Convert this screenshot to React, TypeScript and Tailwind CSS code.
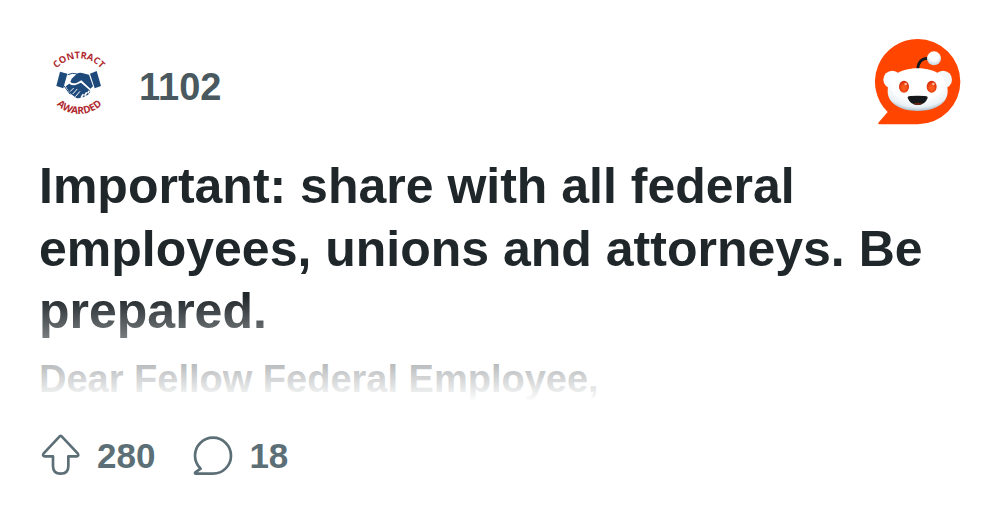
import React from 'react';

function ContractLogo() {
  return (
    <svg viewBox="9 12 240 240" className="size-20 shrink-0" role="img" aria-label="Contract Awarded">
      <defs>
        <path id="arc-top" d="M43 147 A86 86 0 0 1 215 147" />
        <path id="arc-bottom" d="M33 131 A97 97 0 0 0 227 131" />
      </defs>
      <g fill="#b02a30" fontFamily="'Open Sans', 'Liberation Sans', sans-serif" fontWeight="700" textAnchor="middle">
        <text fontSize="28">
          <textPath href="#arc-top" startOffset="50%">CONTRACT</textPath>
        </text>
        <text fontSize="30">
          <textPath href="#arc-bottom" startOffset="50%">AWARDED</textPath>
        </text>
      </g>
      <g transform="translate(-1 -6)">
        <g fill="#1d4a7a">
          <path d="M73 107 L95 113 L83 157 L62 150Z" />
          <path d="M163 113 L183 105 L196 150 L177 157Z" />
          <path d="M108 128 L124 113 Q130 109 139 111 L160 116 L172 151 L164 158 L137 133 L124 140 Q111 145 104 138Z" />
          <path d="M90 151 L101 143 Q112 151 125 145 L136 140 L162 163 Q166 169 160 172 Q158 180 150 178 Q145 186 137 183 Q130 190 121 185 L103 172Z" />
        </g>
        <g fill="none" stroke="#1d4a7a" strokeWidth="3" strokeLinecap="round" strokeLinejoin="round">
          <path d="M97 116 L110 112 L124 114" />
          <path d="M86 151 L103 174" />
        </g>
        <g fill="none" stroke="#fff" strokeLinecap="round">
          <path d="M113 157 L104 166" strokeWidth="3" />
          <path d="M124 160 L112 173" strokeWidth="3" />
          <path d="M132 167 L120 181" strokeWidth="3" />
          <g strokeWidth="5">
            <path d="M138 182 L142 176" />
            <path d="M148 177 L152 171" />
            <path d="M157 170 L160 166" />
          </g>
        </g>
      </g>
    </svg>
  );
}

function RedditLogo() {
  return (
    <svg viewBox="30 27 258 258" className="size-[86px] shrink-0" role="img" aria-label="Reddit">
      <defs>
        <radialGradient id="head" cx="0.5" cy="0.3" r="0.72">
          <stop offset="0.6" stopColor="#fff" />
          <stop offset="0.85" stopColor="#e8f0f5" />
          <stop offset="1" stopColor="#9fb4c4" />
        </radialGradient>
        <radialGradient id="ball" cx="0.5" cy="0.3" r="0.7">
          <stop offset="0.5" stopColor="#fff" />
          <stop offset="1" stopColor="#c5d3dc" />
        </radialGradient>
        <radialGradient id="eye" cx="0.5" cy="0.6" r="0.55">
          <stop offset="0.3" stopColor="#ff5a1c" />
          <stop offset="1" stopColor="#d52a08" />
        </radialGradient>
      </defs>
      <path
        fill="#ff4500"
        d="M158 27 A128 128 0 0 1 158 283 H44 Q36 283 42 276 L68 246 A128 128 0 0 1 158 27Z"
      />
      <path d="M158 117 Q161 84 190 85" fill="none" stroke="#111820" strokeWidth="8" />
      <circle cx="207" cy="85" r="21" fill="url(#ball)" />
      <circle cx="82" cy="149" r="27" fill="#fafcfd" />
      <circle cx="234" cy="149" r="27" fill="#f4f8fa" />
      <path
        d="M158 115 C215 115 248 142 248 184 C248 222 208 243 158 243 C108 243 68 222 68 184 C68 142 101 115 158 115Z"
        fill="url(#head)"
      />
      <ellipse cx="117" cy="170" rx="15" ry="18" fill="url(#eye)" />
      <ellipse cx="200" cy="170" rx="15" ry="18" fill="url(#eye)" />
      <circle cx="122" cy="162" r="4" fill="#ffb59b" />
      <circle cx="205" cy="162" r="4" fill="#ffb59b" />
      <path
        d="M128 204 Q127 198 136 198 Q158 196 180 198 Q189 198 188 204 Q180 225 158 225 Q136 225 128 204Z"
        fill="#15181b"
      />
      <path d="M144 221 Q158 215 172 221 Q166 225 158 225 Q150 225 144 221Z" fill="#66200f" />
    </svg>
  );
}

function UpvoteIcon() {
  return (
    <svg viewBox="27 39 126 129" className="h-[43px] w-[42px]" fill="none" stroke="#5c6f76" strokeWidth="8" strokeLinejoin="round" aria-hidden="true">
      <path d="M89 46 Q92 43 95 46 L143 97 Q148 105 139 106 H115 V136 Q115 158 92 158 Q69 158 69 136 V106 H45 Q36 105 41 97Z" />
    </svg>
  );
}

function CommentIcon() {
  return (
    <svg viewBox="484 39 126 129" className="h-[43px] w-[42px]" fill="none" stroke="#5c6f76" strokeWidth="8" strokeLinejoin="round" aria-hidden="true">
      <path d="M550 50 A54 54 0 0 1 550 158 H499 Q494 158 497 154 L513 143 Q496 126 496 104 A54 54 0 0 1 550 50Z" />
    </svg>
  );
}

export default function App() {
  return (
    <main className="min-h-screen bg-white px-[39px] pt-[39px] pb-10 font-['Liberation_Sans',Arial,sans-serif] font-bold">
      <header className="flex items-center justify-between">
        <div className="flex items-center gap-5">
          <ContractLogo />
          <span className="pt-2.5 text-[38px] leading-10 text-[#4a5960]">1102</span>
        </div>
        <RedditLogo />
      </header>

      <article className="relative mt-[30px] h-[247px] overflow-hidden">
        <h1 className="text-[50px] leading-tight text-[#20272b]">
          Important: share with all federal employees, unions and attorneys. Be prepared.
        </h1>
        <p className="mt-3 text-[38px] leading-12 text-[#3a4246]">Dear Fellow Federal Employee,</p>
        <div className="absolute inset-x-0 bottom-0 h-[106px] bg-linear-to-b from-white/0 to-white" />
      </article>

      <footer className="mt-8 flex items-center gap-9 text-[35px] leading-10 text-[#5c6f76]">
        <div className="flex items-center gap-4">
          <UpvoteIcon />
          <span>280</span>
        </div>
        <div className="flex items-center gap-4">
          <CommentIcon />
          <span>18</span>
        </div>
      </footer>
    </main>
  );
}
